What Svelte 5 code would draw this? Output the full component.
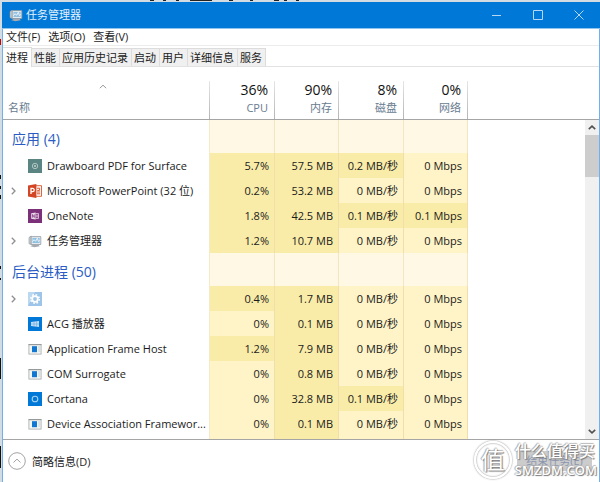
<script>
  // 菜单和标签页
  const menus = ['文件(F)', '选项(O)', '查看(V)'];
  const tabs = ['进程', '性能', '应用历史记录', '启动', '用户', '详细信息', '服务'];

  // 资源列
  const columns = [
    { name: 'CPU', total: '36%' },
    { name: '内存', total: '90%' },
    { name: '磁盘', total: '8%' },
    { name: '网络', total: '0%' }
  ];

  // hot: 每一列是否用深色显示
  const groups = [
    {
      title: '应用 (4)',
      rows: [
        { name: 'Drawboard PDF for Surface', icon: 'drawboard', values: ['5.7%', '57.5 MB', '0.2 MB/秒', '0 Mbps'], hot: [1, 1, 1, 0] },
        { name: 'Microsoft PowerPoint (32 位)', icon: 'powerpoint', expand: true, values: ['0.2%', '53.2 MB', '0 MB/秒', '0 Mbps'], hot: [1, 1, 0, 0] },
        { name: 'OneNote', icon: 'onenote', values: ['1.8%', '42.5 MB', '0.1 MB/秒', '0.1 Mbps'], hot: [1, 1, 1, 1] },
        { name: '任务管理器', icon: 'taskmgr', expand: true, values: ['1.2%', '10.7 MB', '0 MB/秒', '0 Mbps'], hot: [1, 1, 0, 0] }
      ]
    },
    {
      title: '后台进程 (50)',
      rows: [
        { name: '', icon: 'gear', expand: true, values: ['0.4%', '1.7 MB', '0 MB/秒', '0 Mbps'], hot: [1, 1, 0, 0] },
        { name: 'ACG 播放器', icon: 'acg', values: ['0%', '0.1 MB', '0 MB/秒', '0 Mbps'], hot: [0, 1, 0, 0] },
        { name: 'Application Frame Host', icon: 'exe', values: ['1.2%', '7.9 MB', '0 MB/秒', '0 Mbps'], hot: [1, 1, 0, 0] },
        { name: 'COM Surrogate', icon: 'exe', values: ['0%', '0.8 MB', '0 MB/秒', '0 Mbps'], hot: [0, 1, 0, 0] },
        { name: 'Cortana', icon: 'cortana', values: ['0%', '32.8 MB', '0.1 MB/秒', '0 Mbps'], hot: [0, 1, 1, 0] },
        { name: 'Device Association Framewor...', icon: 'exe', values: ['0%', '0.1 MB', '0 MB/秒', '0 Mbps'], hot: [0, 1, 0, 0] }
      ]
    }
  ];

  let activeTab = '进程';
</script>

{#snippet appIcon(kind)}
  <svg class="icon" viewBox="0 0 14 14" aria-hidden="true">
    {#if kind === 'drawboard'}
      <rect width="14" height="14" fill="#5b8583" />
      <circle cx="7" cy="7" r="2.7" fill="none" stroke="#c3d4d3" stroke-width=".8" />
      <circle cx="7" cy="7" r="1" fill="#c3d4d3" />
    {:else if kind === 'powerpoint'}
      <path d="M7 1.7h6.5v10.6H7z" fill="#fff" stroke="#d9532c" stroke-width=".9" />
      <path d="M9 4.2h2.6v2.2H9.2M9 8h3.2M9 9.8h3.2" fill="none" stroke="#d9532c" stroke-width="1" />
      <path d="M0 1.6 8.4 0v14L0 12.4z" fill="#d24625" />
      <path d="M3 10V4.4h1.6a1.6 1.6 0 0 1 0 3.3H3" fill="none" stroke="#fff" stroke-width="1.3" />
    {:else if kind === 'onenote'}
      <rect width="14" height="14" fill="#7c3079" />
      <path d="M7.5 4.5h3v5h-3M8 6.2h2.5M8 7.8h2.5" fill="none" stroke="#e3cfe3" stroke-width=".8" />
      <path d="M3.2 4.3 7.6 3.6v6.8l-4.4-.7z" fill="#eadbea" />
      <path d="M4.5 8.6V5.5l1.8 3V5.4" fill="none" stroke="#7c3079" stroke-width=".7" />
    {:else if kind === 'taskmgr'}
      <path d="M1 3.5 3.2 2v8.5L1 9.7z" fill="#cfd3d6" stroke="#8b9196" stroke-width=".6" />
      <path d="M3.2 2.6h9.6v7.9H3.2z" fill="#edf0f2" stroke="#8f979d" stroke-width=".8" />
      <path d="M4.4 3.9h7.3v5.2H4.4z" fill="#8fc0e2" />
      <path d="m4.4 7.7 1.7-2 1.5 1.6L9.3 4.3l1.2 3.2 1.2-1" fill="none" stroke="#fff" stroke-width=".8" />
      <path d="M2.3 12.2 5 10.8h5.4l1.4 1.5-5.3.9z" fill="#a5abb0" />
    {:else if kind === 'gear'}
      <rect width="14" height="14" fill="#9cc5e9" />
      <path d="M0 14V0h7z" fill="#bad8f0" />
      <circle cx="7" cy="7" r="2.8" fill="none" stroke="#fff" stroke-width="1.8" />
      <circle cx="7" cy="7" r="4.3" fill="none" stroke="#fff" stroke-width="1.5" stroke-dasharray="1.7 1.68" />
    {:else if kind === 'acg'}
      <rect width="14" height="14" fill="#0078d7" />
      <path d="M3 5.1 11 4v6l-8-1z" fill="#c5def4" />
      <path d="M3 7h8M6 4.5v5M8.6 4.2v5.6" stroke="#5ea8e4" stroke-width=".6" />
    {:else if kind === 'cortana'}
      <rect width="14" height="14" fill="#0078d7" />
      <circle cx="7" cy="7" r="2.8" fill="none" stroke="#a9d2f3" stroke-width="1.1" />
    {:else}
      <rect x=".9" y="2.4" width="12.2" height="9.7" fill="#f4f5f5" stroke="#a5a7a9" stroke-width=".8" />
      <path d="M.6 2.7h12.8" stroke="#8c8f91" stroke-width=".9" />
      <rect x="4" y="4.2" width="5" height="6" fill="#1177d1" />
      <path d="M10.2 5h2M10.2 7h2M10.2 9h2" stroke="#b4b8ba" stroke-width=".7" />
    {/if}
  </svg>
{/snippet}

<div class="desktop">
  <main class="window">
    <header class="titlebar">
      {@render appIcon('taskmgr')}
      <h1>任务管理器</h1>
      <div class="controls">
        <button type="button" aria-label="最小化">
          <svg viewBox="0 0 10 10"><path d="M0 5.5h9" /></svg>
        </button>
        <button type="button" aria-label="最大化">
          <svg viewBox="0 0 10 10"><path d="M.5.5h9v9h-9z" /></svg>
        </button>
        <button type="button" aria-label="关闭">
          <svg viewBox="0 0 10 10"><path d="m.5.5 9 9m0-9-9 9" /></svg>
        </button>
      </div>
    </header>

    <nav class="menubar">
      {#each menus as menu}
        <button type="button">{menu}</button>
      {/each}
    </nav>

    <div class="tabs" role="tablist">
      {#each tabs as tab}
        <button
          type="button"
          role="tab"
          aria-selected={tab === activeTab}
          class:active={tab === activeTab}
          on:click={() => (activeTab = tab)}>{tab}</button>
      {/each}
    </div>

    <div class="list">
      <table>
        <colgroup>
          <col class="col-name" />
          <col class="col-odd" />
          <col class="col-even" />
          <col class="col-odd" />
          <col class="col-even" />
          <col />
        </colgroup>
        <thead>
          <tr>
            <th class="name-head" scope="col">
              <svg class="sort" viewBox="0 0 8 5"><path d="m.8 4.2 3.2-3 3.2 3" /></svg>
              <span>名称</span>
            </th>
            {#each columns as col}
              <th class="num-head" scope="col">
                <strong>{col.total}</strong>
                <span>{col.name}</span>
              </th>
            {/each}
            <td></td>
          </tr>
        </thead>
        <tbody>
          {#each groups as group}
            <tr class="group">
              <th scope="rowgroup">{group.title}</th>
              {#each columns as _}
                <td class="cell blank"></td>
              {/each}
              <td></td>
            </tr>
            {#each group.rows as row}
              <tr>
                <th scope="row">
                  <div class="process">
                    <span class="expander">
                      {#if row.expand}
                        <svg viewBox="0 0 5 8"><path d="m.8.8 3.2 3.2L.8 7.2" /></svg>
                      {/if}
                    </span>
                    {@render appIcon(row.icon)}
                    <span>{row.name}</span>
                  </div>
                </th>
                {#each row.values as value, i}
                  <td class="cell" class:hot={row.hot[i]}>{value}</td>
                {/each}
                <td></td>
              </tr>
            {/each}
          {/each}
          <!-- 列表底部露出的下一行 -->
          <tr class="tail">
            <td class="edge"></td>
            <td class="cell"></td>
            <td class="cell hot"></td>
            <td class="cell"></td>
            <td class="cell"></td>
            <td></td>
          </tr>
        </tbody>
      </table>

      <div class="side">
        <div class="side-head"></div>
        <div class="scrollbar">
          <button type="button" aria-label="向上滚动">
            <svg viewBox="0 0 8 5"><path d="m.8 4.2 3.2-3 3.2 3" /></svg>
          </button>
          <div class="thumb"></div>
          <button type="button" class="down" aria-label="向下滚动">
            <svg viewBox="0 0 8 5"><path d="m.8.8 3.2 3 3.2-3" /></svg>
          </button>
        </div>
      </div>
    </div>

    <footer class="footer">
      <button type="button" class="fewer">
        <svg viewBox="0 0 18 18">
          <circle cx="9" cy="9" r="8.3" />
          <path d="m5.5 10.5 3.5-3.4 3.5 3.4" />
        </svg>
        简略信息(D)
      </button>
      <button type="button" class="end-task" disabled>结束任务(E)</button>
      <div class="watermark">
        <span class="seal">值</span>
        <span class="brand">
          <span class="brand-name">什么值得买</span>
          <span class="brand-url">SMZDM.COM</span>
        </span>
      </div>
    </footer>
  </main>
</div>

<style>
  :global(body) {
    margin: 0;
  }

  .desktop {
    box-sizing: border-box;
    height: 100vh;
    padding: 2px 0 0 2px;
    overflow: hidden;
    background:
      linear-gradient(90deg, transparent 150px, #222 150px 154px, transparent 154px 163px, #222 163px 166px, transparent 166px 176px, #222 176px 179px, transparent 179px 190px, #222 190px 212px, transparent 212px 229px, #222 229px 233px, transparent 233px 250px, #222 250px 253px, transparent 253px 274px, #222 274px 279px, transparent 279px 284px, #222 284px 287px, transparent 287px 296px, #222 296px 299px, transparent 299px) top / 100% 1px no-repeat,
      linear-gradient(transparent 39px, #c00 39px 45px, transparent 45px 175px, #111 175px 179px, transparent 179px 186px, #111 186px 189px, transparent 189px 195px, #111 195px 199px, transparent 199px 266px, #111 266px 269px, transparent 269px 278px, #111 278px 280px, transparent 280px 358px, #111 358px 379px, transparent 379px 446px, #111 446px 468px, transparent 468px) left / 1px 100% no-repeat,
      #d3dce2;
    font-family: 'Open Sans', 'Noto Sans CJK SC', sans-serif;
    font-size: 11px;
    color: #1b1b1b;
  }

  .window {
    box-sizing: border-box;
    display: flex;
    flex-direction: column;
    height: 100%;
    border: solid #6fb1e8;
    border-width: 0 1px;
    background: #fff;
  }

  button {
    margin: 0;
    padding: 0;
    border: 0;
    background: none;
    font: inherit;
    color: inherit;
  }

  svg {
    display: block;
    fill: none;
  }

  .icon {
    width: 14px;
    height: 14px;
    flex: none;
  }

  /* 标题栏 */
  .titlebar {
    display: flex;
    align-items: center;
    height: 26px;
    flex: none;
    margin: 0 -1px;
    padding: 0 1px 0 7px;
    border-bottom: 1px solid #8fc4ee;
    background: #0078d7;
  }

  h1 {
    flex: 1;
    margin: 0 0 0 3px;
    font-size: 11px;
    font-weight: 400;
    line-height: 16px;
    color: #e3f0fb;
  }

  .controls {
    display: flex;
    height: 100%;
  }

  .controls button {
    display: grid;
    place-items: center;
    width: 41px;
  }

  .controls svg {
    width: 10px;
    height: 10px;
    stroke: #b5d7f4;
  }

  /* 菜单 */
  .menubar {
    display: flex;
    gap: 8px;
    height: 16px;
    flex: none;
    padding-left: 3px;
    border-bottom: 1px solid #ececec;
    line-height: 16px;
  }

  /* 标签页 */
  .tabs {
    display: flex;
    align-items: flex-end;
    height: 20px;
    flex: none;
    border-bottom: 1px solid #e2e2e2;
  }

  .tabs button {
    height: 18px;
    padding: 0 3px 0 2px;
    border: solid #dcdcdc;
    border-width: 1px 1px 0 0;
    background: #f0f0f0;
    line-height: 17px;
  }

  .tabs .active {
    height: 20px;
    margin-bottom: -1px;
    padding: 0 3px;
    background: #fff;
  }

  /* 进程列表 */
  .list {
    display: flex;
    flex: 1;
    min-height: 0;
    overflow: hidden;
    border-bottom: 1px solid #a5a5a5;
  }

  table {
    flex: 1;
    align-self: flex-start;
    width: 100%;
    table-layout: fixed;
    border-spacing: 0;
    line-height: 16px;
  }

  .col-name {
    width: 207px;
  }

  .col-odd {
    width: 65px;
  }

  .col-even {
    width: 64px;
  }

  th,
  td {
    box-sizing: border-box;
    padding: 0;
    font-weight: 400;
    text-align: left;
  }

  thead th,
  thead td {
    height: 53px;
    border-bottom: 1px solid #a5a5a5;
    vertical-align: bottom;
    color: #687b8f;
  }

  .name-head,
  .num-head {
    background: linear-gradient(#e6e6e6, #b4b4b4) right bottom / 1px 38px no-repeat;
  }

  .name-head {
    padding: 0 12px 3px 5px;
  }

  .name-head span,
  .num-head span {
    display: block;
  }

  .sort {
    width: 8px;
    height: 5px;
    margin: 0 auto 11px;
    stroke: #9a9a9a;
  }

  .num-head {
    padding: 0 7px 3px 0;
    text-align: right;
  }

  .num-head strong {
    display: block;
    font-size: 14px;
    font-weight: 400;
    line-height: 20px;
    color: #111;
  }

  tbody tr {
    height: 25px;
  }

  tbody .group {
    height: 33px;
  }

  tbody th,
  .edge {
    border-right: 1px solid #f6e8cb;
  }

  .group th {
    padding: 5px 0 0 9px;
    font-size: 14px;
    line-height: 20px;
    color: #2a5cc4;
  }

  .cell {
    padding-right: 5px;
    border-right: 1px solid #f0dfa6;
    background: #fff4c7;
    text-align: right;
    white-space: nowrap;
  }

  .hot {
    background: #f9eca9;
  }

  .blank {
    border-color: #f6e6c0;
    background: #fff8e4;
  }

  .process {
    display: flex;
    align-items: center;
    padding-left: 8px;
    white-space: nowrap;
  }

  .process .icon {
    margin-right: 5px;
  }

  .expander {
    width: 17px;
  }

  .expander svg {
    width: 5px;
    height: 8px;
    stroke: #8e8e8e;
    stroke-width: 1.3;
  }

  /* 滚动条 */
  .side {
    display: flex;
    flex-direction: column;
    width: 14px;
    flex: none;
  }

  .side-head {
    height: 52px;
    flex: none;
    border-bottom: 1px solid #a5a5a5;
  }

  .scrollbar {
    display: flex;
    flex-direction: column;
    flex: 1;
    background: #f0f0f0;
  }

  .scrollbar button {
    display: grid;
    place-items: center;
    height: 15px;
  }

  .scrollbar .down {
    margin-top: auto;
  }

  .scrollbar svg {
    width: 8px;
    height: 5px;
    stroke: #505050;
    stroke-width: 1.6;
  }

  .thumb {
    height: 42px;
    background: #cdcdcd;
  }

  /* 底部 */
  .footer {
    position: relative;
    display: flex;
    align-items: center;
    justify-content: space-between;
    height: 42px;
    flex: none;
    padding: 0 7px 0 5px;
  }

  .fewer {
    display: flex;
    align-items: center;
    gap: 6px;
  }

  .fewer svg {
    width: 18px;
    height: 18px;
    stroke: #a3a3a3;
  }

  .end-task {
    width: 75px;
    height: 20px;
    background: #ccc;
    line-height: 20px;
    color: #8b96ae;
  }

  /* 水印 */
  .watermark {
    position: absolute;
    right: 2px;
    bottom: 3px;
    display: flex;
    align-items: center;
    gap: 3px;
    color: #fff;
    text-shadow: 1px 1px 1px #777, -1px 0 1px #aaa, 0 -1px 1px #bbb;
    pointer-events: none;
  }

  .seal {
    width: 34px;
    height: 34px;
    border: 2px solid #fff;
    border-radius: 50%;
    box-shadow: 0 0 2px #777, inset 0 0 2px #777;
    font-size: 24px;
    line-height: 34px;
    text-align: center;
  }

  .brand {
    display: flex;
    flex-direction: column;
  }

  .brand-name {
    font-size: 16px;
    font-weight: 500;
    line-height: 20px;
  }

  .brand-url {
    font-size: 13px;
    font-weight: 600;
    line-height: 18px;
  }
</style>
